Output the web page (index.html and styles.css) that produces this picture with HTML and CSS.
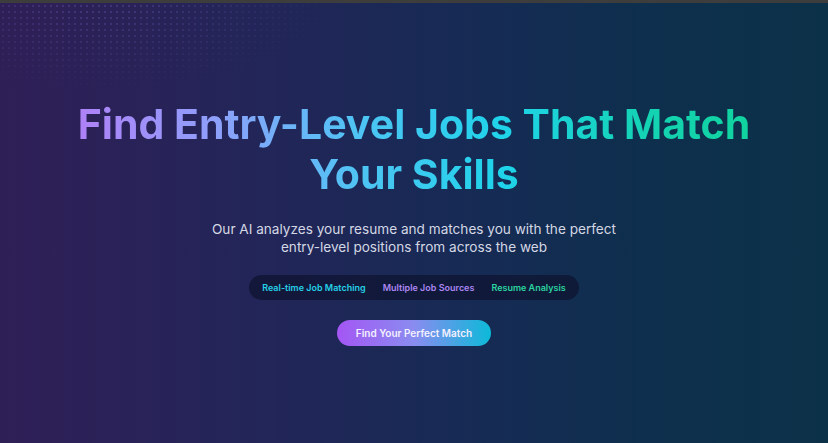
FILE: index.html
```html
<!DOCTYPE html>
<html lang="en">
<head>
<meta charset="utf-8">
<title>Find Entry-Level Jobs</title>
<link rel="stylesheet" href="styles.css">
</head>
<body>
<div class="topbar"></div>
<main class="hero">
  <div class="dots"></div>
  <div class="content">
    <h1 class="title">Find Entry-Level Jobs That Match Your Skills</h1>
    <p class="subtitle">Our AI analyzes your resume and matches you with the perfect<br>entry-level positions from across the web</p>
    <div class="features">
      <span class="feat feat-cyan">Real-time Job Matching</span>
      <span class="feat feat-purple">Multiple Job Sources</span>
      <span class="feat feat-green">Resume Analysis</span>
    </div>
    <button class="cta">Find Your Perfect Match</button>
  </div>
</main>
</body>
</html>
```

FILE: styles.css
```css
* { box-sizing: border-box; }
html, body { margin: 0; padding: 0; }
body {
  width: 828px;
  height: 443px;
  overflow: hidden;
  font-family: Inter, "Noto Sans", sans-serif;
  background: #3c3c3c;
}
.topbar {
  height: 3px;
  background: #3d3d3d;
}
.hero {
  position: relative;
  height: 440px;
  background: linear-gradient(90deg, #2f1f57 0%, #232558 30%, #172a55 55%, #0e2f4d 78%, #0b3148 100%);
  overflow: hidden;
}
.dots {
  position: absolute;
  left: 0; top: 0;
  width: 340px; height: 90px;
  background-image: radial-gradient(circle, rgba(150,120,230,0.3) 0.6px, transparent 1px);
  background-size: 6px 6px;
  -webkit-mask-image: radial-gradient(ellipse at 30% 0%, black 10%, transparent 70%);
  mask-image: radial-gradient(ellipse at 30% 0%, black 10%, transparent 70%);
}
.content {
  position: relative;
  display: flex;
  flex-direction: column;
  align-items: center;
  padding-top: 96px;
}
.title {
  margin: 0;
  width: 720px;
  text-align: center;
  font-size: 41px;
  line-height: 50px;
  font-weight: 700;
  background: linear-gradient(90deg, #b47cf6 0%, #8f9ffb 22%, #4fc4f4 42%, #1fd3ea 62%, #14d3b4 82%, #10d49a 100%);
  -webkit-background-clip: text;
  background-clip: text;
  color: transparent;
}
.subtitle {
  margin: 21px 0 0;
  text-align: center;
  font-size: 13.6px;
  line-height: 18px;
  color: #d4d7e4;
}
.features {
  margin-top: 19px;
  display: flex;
  gap: 17px;
  align-items: center;
  height: 25px;
  padding: 0 13px;
  border-radius: 999px;
  background: rgba(15, 20, 50, 0.75);
}
.feat {
  font-size: 9px;
  font-weight: 600;
}
.feat-cyan { color: #25cfe6; }
.feat-purple { color: #ab86f2; }
.feat-green { color: #2ad3a0; }
.cta {
  margin-top: 20px;
  height: 26px;
  padding: 0 19px;
  border: none;
  border-radius: 999px;
  font-family: Inter, "Noto Sans", sans-serif;
  font-size: 10px;
  font-weight: 600;
  color: #f3f0ff;
  background: linear-gradient(90deg, #a456f4 0%, #8a8cf0 50%, #0cbad8 100%);
}
```
